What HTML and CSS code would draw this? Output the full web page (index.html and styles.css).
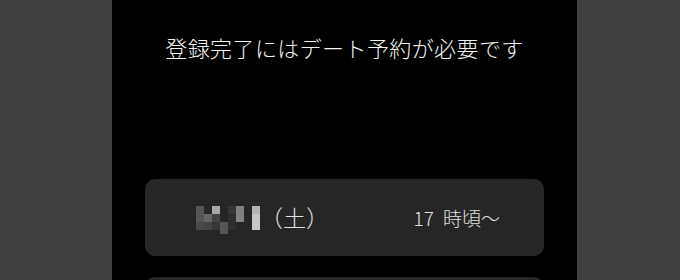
FILE: index.html
```html
<!DOCTYPE html>
<html lang="ja">
<head>
<meta charset="utf-8">
<link rel="stylesheet" href="styles.css">
</head>
<body>
<div class="side side-left"></div>
<main class="main">
  <h1 class="title">登録完了にはデート予約が必要です</h1>
  <div class="slots">
    <div class="slot">
      <div class="day">
        <div class="mosaic" aria-label="日付">
          <span class="c5"></span><span class="c0"></span><span class="c9"></span><span class="c0"></span><span class="c2"></span><span class="c7"></span><span class="c0"></span><span class="c10"></span>
          <span class="c5"></span><span class="c6"></span><span class="c3"></span><span class="c0"></span><span class="c1"></span><span class="c7"></span><span class="c0"></span><span class="c11"></span>
          <span class="c4"></span><span class="c3"></span><span class="c2"></span><span class="c5"></span><span class="c1"></span><span class="c0"></span><span class="c0"></span><span class="c11"></span>
          <span class="c0"></span><span class="c0"></span><span class="c0"></span><span class="c5"></span><span class="c0"></span><span class="c0"></span><span class="c0"></span><span class="c0"></span>
        </div>
        <span class="weekday">（土）</span>
      </div>
      <span class="time">17 時頃〜</span>
    </div>
    <div class="slot"></div>
  </div>
</main>
<div class="side side-right"></div>
</body>
</html>
```
FILE: styles.css
```css
html, body {
  margin: 0;
  padding: 0;
  height: 100%;
  overflow: hidden;
}
body {
  display: flex;
  background: #404040;
  font-family: "Noto Sans CJK JP", "Noto Sans", sans-serif;
}
.side {
  background: #404040;
}
.side-left {
  width: 112px;
  flex: none;
}
.side-right {
  flex: 1;
}
.main {
  width: 465px;
  flex: none;
  background: #000;
  display: flex;
  flex-direction: column;
  align-items: center;
  padding-top: 31px;
  box-sizing: border-box;
}
.title {
  margin: 0;
  font-size: 22px;
  font-weight: 300;
  line-height: 32px;
  color: #f2f2f2;
  letter-spacing: 0.4px;
}
.slots {
  margin-top: 116px;
  width: 399px;
  display: flex;
  flex-direction: column;
  gap: 21px;
}
.slot {
  height: 77px;
  background: #262626;
  border-radius: 10px;
  display: flex;
  align-items: center;
  justify-content: space-between;
  padding: 0 44px 0 51px;
  color: #e0e0e0;
  font-size: 19px;
  font-weight: 300;
  line-height: 1;
}
.day {
  display: flex;
  align-items: center;
}
.mosaic {
  display: grid;
  grid-template-columns: repeat(8, 8px);
  grid-template-rows: repeat(3, 8px) 4px;
  margin-top: 4px;
}
.mosaic span { display: block; }
.c0 { background: #262626; }
.c1 { background: #2e2e2e; }
.c2 { background: #363636; }
.c3 { background: #444; }
.c4 { background: #4a4a4a; }
.c5 { background: #555; }
.c6 { background: #666; }
.c7 { background: #808080; }
.c9 { background: #a8a8a8; }
.c10 { background: #b4b4b4; }
.c11 { background: #c8c8c8; }
.weekday {
  font-size: 23px;
  color: #e0e0e0;
}
.time {
  color: #e0e0e0;
  word-spacing: 5px;
}
```
